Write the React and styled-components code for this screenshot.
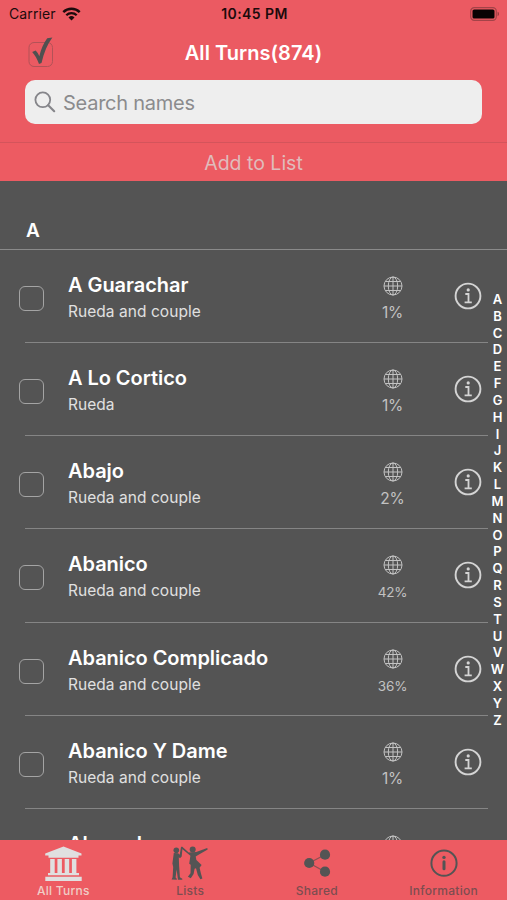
import { useState } from "react";
import styled, { createGlobalStyle } from "styled-components";

const GlobalStyle = createGlobalStyle`
  * {
    box-sizing: border-box;
  }
  body {
    margin: 0;
    background-color: #545454;
    font-family: Inter, "Liberation Sans", sans-serif;
  }
  button {
    font-family: inherit;
    border: 0;
    padding: 0;
    background-color: transparent;
    cursor: pointer;
  }
`;
const Screen = styled.div`
  position: relative;
  display: flex;
  flex-direction: column;
  width: 507px;
  height: 900px;
  overflow: hidden;
  background-color: #545454;
`;
const Header = styled.header`
  flex: none;
  height: 143px;
  background-color: #eb5a62;
  border-bottom: 1px solid #d4545b;
`;
const StatusBar = styled.div`
  display: grid;
  grid-template-columns: 1fr auto 1fr;
  align-items: center;
  height: 27px;
  padding: 0 7px 0 9px;
  color: #1c0b0c;
  font-size: 14px;
`;
const Carrier = styled.div`
  display: flex;
  align-items: center;
  gap: 6px;
  letter-spacing: 0.1px;
`;
const Time = styled.div`
  font-weight: 600;
  font-size: 14px;
  letter-spacing: 0.4px;
`;
const BatteryIcon = styled.svg`
  justify-self: end;
`;
const TitleBar = styled.div`
  display: grid;
  grid-template-columns: 1fr auto 1fr;
  align-items: center;
  height: 50px;
  padding: 0 27px;
`;
const Title = styled.h1`
  margin: 0;
  padding-top: 2px;
  color: #fff;
  font-size: 20px;
  font-weight: 600;
  line-height: 24px;
  letter-spacing: 0.05px;
`;
const SelectButton = styled.button`
  width: 28px;
  height: 32px;
`;
const SearchBar = styled.label`
  display: flex;
  align-items: center;
  gap: 7px;
  height: 44px;
  margin: 3px 25px 0;
  padding-left: 9px;
  border-radius: 10px;
  background-color: #eee;
`;
const SearchInput = styled.input`
  flex: 1;
  border: 0;
  outline: 0;
  padding: 2px 0 0;
  background-color: transparent;
  font-family: inherit;
  font-size: 20px;
  letter-spacing: -0.25px;
  color: #444;
  &::placeholder {
    color: #8b8b8d;
    opacity: 1;
  }
`;
const AddButton = styled.button`
  flex: none;
  height: 38px;
  padding-top: 1px;
  background-color: #ed5b62;
  color: #e0bcbc;
  font-size: 19.5px;
`;
const List = styled.main`
  flex: 1;
  min-height: 0;
  overflow: hidden;
`;
const SectionHeader = styled.h2`
  display: flex;
  align-items: flex-end;
  height: 68.5px;
  margin: 0;
  padding: 0 26px 6px;
  border-bottom: 1px solid #8a8a8a;
  color: #fff;
  font-size: 19px;
  font-weight: 600;
  line-height: 24px;
`;
const Row = styled.div`
  height: 93.25px;
`;
const RowBody = styled.div`
  display: flex;
  align-items: flex-start;
  height: 92.25px;
  padding-left: 19px;
`;
const Divider = styled.div`
  width: 463px;
  height: 1px;
  margin-left: 25px;
  background-color: #858585;
`;
const Checkbox = styled.button`
  flex: none;
  width: 25px;
  height: 25px;
  margin: 36px 24px 0 0;
  border: 1px solid #a4a4a4;
  border-radius: 6px;
  background-color: ${(props) => (props.$checked ? "#eb5a62" : "transparent")};
`;
const Names = styled.div`
  flex: none;
  width: 294.5px;
  padding-top: 22px;
`;
const Name = styled.div`
  color: #fff;
  font-size: 20px;
  font-weight: 600;
  line-height: 26px;
  letter-spacing: -0.05px;
`;
const Kind = styled.div`
  color: #e0e0e0;
  font-size: 15.5px;
  line-height: 27px;
  letter-spacing: 0.05px;
`;
const Stats = styled.div`
  flex: none;
  display: flex;
  flex-direction: column;
  align-items: center;
  gap: 7px;
  width: 60px;
  padding-top: 26px;
  color: #c2c2c2;
`;
const Percent = styled.span`
  font-size: ${(props) => (props.$small ? "13.5px" : "15.5px")};
  line-height: 20px;
  letter-spacing: -0.2px;
`;
const InfoButton = styled.button`
  width: 28px;
  height: 28px;
  margin: 32px 0 0 31.5px;
  color: #d4d4d4;
`;
const IndexBar = styled.nav`
  position: absolute;
  top: 291px;
  right: 0;
  width: 19px;
  display: flex;
  flex-direction: column;
  align-items: center;
`;
const Letter = styled.button`
  height: 16.84px;
  color: #fff;
  font-size: 13px;
  font-weight: 600;
  line-height: 16.84px;
`;
const TabBar = styled.nav`
  flex: none;
  display: grid;
  grid-template-columns: repeat(4, 1fr);
  height: 60px;
  background-color: #ed5b62;
`;
const Tab = styled.button`
  display: flex;
  flex-direction: column;
  align-items: center;
  padding-top: 4px;
  gap: 1px;
  color: ${(props) => (props.$active ? "#e0e0e0" : "#545454")};
`;
const TabLabel = styled.span`
  font-size: 12px;
  font-weight: 500;
  line-height: 16px;
  letter-spacing: 0.25px;
  color: ${(props) => (props.$active ? "#f0cdc6" : "#7d4d50")};
`;

const WifiIcon = () => (
  <svg width="19" height="14" viewBox="0 0 19 14" fill="none" stroke="#1c0b0c">
    <path d="M1.3 5.2a11.6 11.6 0 0 1 16.4 0" strokeWidth="2.4" />
    <path d="M4.3 8.3a7.4 7.4 0 0 1 10.4 0" strokeWidth="2.3" />
    <path d="M9.5 13.6 6.5 10.5a4.3 4.3 0 0 1 6 0z" fill="#1c0b0c" stroke="none" />
  </svg>
);

const Battery = () => (
  <BatteryIcon width="30" height="14" viewBox="0 0 30 14">
    <rect x="0.7" y="0.7" width="25.6" height="12.6" rx="3.6" fill="none" stroke="#a34348" strokeWidth="1.2" />
    <rect x="2.5" y="2.5" width="22" height="9" rx="1.6" fill="#080303" />
    <path d="M27.6 4.8c1.8.6 1.8 3.8 0 4.4z" fill="#94393e" />
  </BatteryIcon>
);

const CheckIcon = () => (
  <svg width="28" height="32" viewBox="0 0 28 32">
    <rect x="2" y="6.5" width="23.5" height="24" rx="5" fill="none" stroke="#b35257" />
    <path d="M5.2 16 8.6 14.600c1.600 1.600 2.700 3.400 3.700 5.600C14 13 16.800 6.700 20.200 2.200L25.400 1.500C20.400 8 17 16.500 14.500 27l-2.500.9C10.400 23.500 8.200 19.500 5.200 16z" fill="#505050" />
  </svg>
);

const SearchIcon = () => (
  <svg width="22" height="22" viewBox="0 0 22 22" fill="none" stroke="#85858a" strokeWidth="1.8" strokeLinecap="round">
    <circle cx="8.8" cy="8.8" r="7.4" />
    <path d="m14.2 14.2 6 6" strokeWidth="2.1" />
  </svg>
);

const GlobeIcon = () => (
  <svg width="20" height="20" viewBox="0 0 20 20" fill="none" stroke="currentColor" strokeWidth="1">
    <circle cx="10" cy="10" r="9" />
    <ellipse cx="10" cy="10" rx="4.7" ry="9" />
    <path d="M10 1v18M1 10h18M2.5 5.5h15M2.5 14.5h15" />
  </svg>
);

const InfoIcon = () => (
  <svg width="28" height="28" viewBox="0 0 28 28" fill="none" stroke="currentColor">
    <circle cx="14" cy="14" r="12.4" strokeWidth="1.9" />
    <path d="M11.3 12h3.2v8.2M10.6 20.3h7.2" strokeWidth="1.8" />
    <circle cx="14.2" cy="7.9" r="1.6" fill="currentColor" stroke="none" />
  </svg>
);

const MuseumIcon = () => (
  <svg width="38" height="38" viewBox="0 0 38 38" fill="currentColor">
    <path d="M19.5 2.5 37.5 9.500v2H34.500v2.300H4.500v-2.300H1.200v-2z" />
    <path d="M6.200 15h4.500v15H6.200zM13.400 15h4.500v15h-4.500zM20.700 15h4.500v15h-4.500zM27.900 15h4.500v15h-4.500z" />
    <path d="M4 29h31v2.300H4zM1.300 32.800h36.400v4.200H1.300z" />
  </svg>
);

const DancersIcon = () => (
  <svg width="38" height="38" viewBox="0 0 38 38" fill="currentColor">
    <circle cx="5.300" cy="6.300" r="2.800" />
    <path d="M2.800 9 7.200 9.200l1.500 1.600L10 3l1.600.2-.9 9.300-1.700 1.800-1.200-1 .3 8.200.8 11.800 2.400 1.400v1H7L5.600 25.500 4.600 33.400l1.200 1.400v.9L.6 35.500l1-2.200.6-10.300L1.400 19.500z" />
    <circle cx="21.700" cy="5.600" r="3" />
    <path d="m10.700 2.200 7 6.400 3.300-.4 4.200-.2L36.200 4l.5 1.500-10 5.700-2 1.400.7 3.300 5.200 5.200-2 2.600 1.400 6 1.400 4.800-2 .8-2.600-4.300-1.800-6.700-1.400.4-1 5.200-2.800 4.400-2.900-1.600 2.600-3.400.2-8.600-1.500-1 1.200-8-8.900-7.200z" />
  </svg>
);

const ShareIcon = () => (
  <svg width="38" height="38" viewBox="0 0 38 38" fill="currentColor">
    <path d="M27 10.700 11.200 19 27 27.700" fill="none" stroke="#8a5053" strokeWidth="1.200" />
    <circle cx="27" cy="10.700" r="5.100" />
    <circle cx="11.200" cy="19" r="5.100" />
    <circle cx="27" cy="27.700" r="5.100" />
  </svg>
);

const InformationIcon = () => (
  <svg width="38" height="38" viewBox="0 0 38 38" fill="none" stroke="currentColor">
    <circle cx="19" cy="19.200" r="12.600" strokeWidth="2" />
    <path d="M19 17.700v7" strokeWidth="3" strokeLinecap="round" />
    <circle cx="19" cy="13.400" r="1.700" fill="currentColor" stroke="none" />
  </svg>
);

const turns = [
  { name: "A Guarachar", kind: "Rueda and couple", percent: 1 },
  { name: "A Lo Cortico", kind: "Rueda", percent: 1 },
  { name: "Abajo", kind: "Rueda and couple", percent: 2 },
  { name: "Abanico", kind: "Rueda and couple", percent: 42 },
  { name: "Abanico Complicado", kind: "Rueda and couple", percent: 36 },
  { name: "Abanico Y Dame", kind: "Rueda and couple", percent: 1 },
  { name: "Abrazala", kind: "Rueda and couple", percent: 1 },
];
const tabs = [
  { label: "All Turns", Icon: MuseumIcon },
  { label: "Lists", Icon: DancersIcon },
  { label: "Shared", Icon: ShareIcon },
  { label: "Information", Icon: InformationIcon },
];
const letters = "ABCDEFGHIJKLMNOPQRSTUVWXYZ".split("");

const TurnRow = ({ turn }) => {
  const [checked, setChecked] = useState(false);
  return (
    <Row>
      <RowBody>
        <Checkbox
          $checked={checked}
          aria-label={turn.name}
          onClick={() => setChecked((prev) => !prev)}
        />
        <Names>
          <Name>{turn.name}</Name>
          <Kind>{turn.kind}</Kind>
        </Names>
        <Stats>
          <GlobeIcon />
          <Percent $small={turn.percent > 9}>{turn.percent}%</Percent>
        </Stats>
        <InfoButton>
          <InfoIcon />
        </InfoButton>
      </RowBody>
      <Divider />
    </Row>
  );
};

export default function App() {
  const [activeTab, setActiveTab] = useState("All Turns");
  return (
    <Screen>
      <GlobalStyle />
      <Header>
        <StatusBar>
          <Carrier>
            Carrier
            <WifiIcon />
          </Carrier>
          <Time>10:45 PM</Time>
          <Battery />
        </StatusBar>
        <TitleBar>
          <SelectButton>
            <CheckIcon />
          </SelectButton>
          <Title>All Turns(874)</Title>
        </TitleBar>
        <SearchBar>
          <SearchIcon />
          <SearchInput placeholder="Search names" />
        </SearchBar>
      </Header>
      <AddButton>Add to List</AddButton>
      <List>
        <SectionHeader>A</SectionHeader>
        {turns.map((turn) => (
          <TurnRow key={turn.name} turn={turn} />
        ))}
      </List>
      <IndexBar>
        {letters.map((letter) => (
          <Letter key={letter}>{letter}</Letter>
        ))}
      </IndexBar>
      <TabBar>
        {tabs.map(({ label, Icon }) => (
          <Tab
            key={label}
            $active={label === activeTab}
            onClick={() => setActiveTab(label)}
          >
            <Icon />
            <TabLabel $active={label === activeTab}>{label}</TabLabel>
          </Tab>
        ))}
      </TabBar>
    </Screen>
  );
}
